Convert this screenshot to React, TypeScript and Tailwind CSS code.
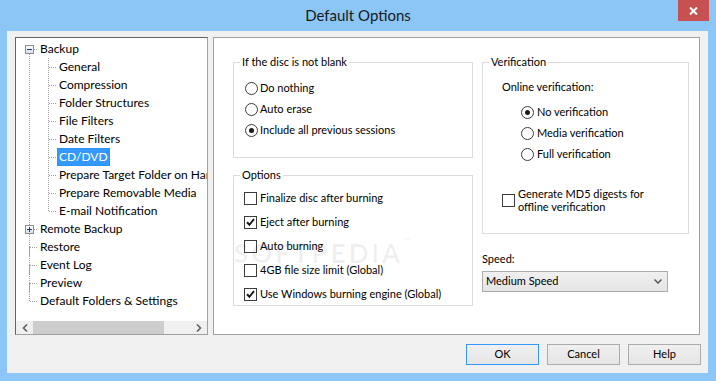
import React from "react";

const DOT = "#a0a0a0";

function RootCell({ up, down, box }: { up?: boolean; down?: boolean; box?: "+" | "-" }) {
  return (
    <svg width="17" height="18" className="shrink-0 block">
      {up && <line x1="8.5" y1="0" x2="8.5" y2={box ? 5 : 9.5} stroke={DOT} strokeDasharray="1 1" />}
      {down && <line x1="8.5" y1={box ? 14 : 9} x2="8.5" y2="18" stroke={DOT} strokeDasharray="1 1" />}
      {!box && up && down && <line x1="8.5" y1="0" x2="8.5" y2="18" stroke={DOT} strokeDasharray="1 1" />}
      <line x1={box ? 13 : 9} y1="9.5" x2="17" y2="9.5" stroke={DOT} strokeDasharray="1 1" />
      {box && (
        <>
          <defs>
            <linearGradient id="bx" x1="0" y1="0" x2="0" y2="1">
              <stop offset="0" stopColor="#ffffff" />
              <stop offset="1" stopColor="#d8dde6" />
            </linearGradient>
          </defs>
          <rect x="4.5" y="5.5" width="8" height="8" fill="url(#bx)" stroke="#8f8f8f" />
          <line x1="6" y1="9.5" x2="11" y2="9.5" stroke="#1f3a78" />
          {box === "+" && <line x1="8.5" y1="7" x2="8.5" y2="12" stroke="#1f3a78" />}
        </>
      )}
    </svg>
  );
}

function PassCell() {
  return (
    <svg width="17" height="18" className="shrink-0 block">
      <line x1="8.5" y1="0" x2="8.5" y2="18" stroke={DOT} strokeDasharray="1 1" />
    </svg>
  );
}

function ChildCell({ last }: { last?: boolean }) {
  return (
    <svg width="19" height="18" className="shrink-0 block">
      <line x1="10.5" y1="0" x2="10.5" y2={last ? 10 : 18} stroke={DOT} strokeDasharray="1 1" />
      <line x1="11" y1="9.5" x2="19" y2="9.5" stroke={DOT} strokeDasharray="1 1" />
    </svg>
  );
}

function Label({ text, selected }: { text: string; selected?: boolean }) {
  return selected ? (
    <span className="h-[18px] px-[1px] flex items-center whitespace-nowrap bg-[#3399ff] text-white border border-dotted border-[#cc6600]">
      {text}
    </span>
  ) : (
    <span className="h-[18px] px-[2px] flex items-center whitespace-nowrap text-black">{text}</span>
  );
}

function Radio({ checked }: { checked?: boolean }) {
  return (
    <span className="w-[13px] h-[13px] rounded-full border border-[#3c3c3c] bg-white flex items-center justify-center shrink-0">
      {checked && <span className="w-[5px] h-[5px] rounded-full bg-[#1c1c1c]" />}
    </span>
  );
}

function Check({ checked }: { checked?: boolean }) {
  return (
    <span className="w-[13px] h-[13px] border border-[#3c3c3c] bg-white flex items-center justify-center shrink-0">
      {checked && (
        <svg width="9" height="9" viewBox="0 0 9 9">
          <path d="M1 4.2 L3.4 6.8 L8 1.2" stroke="#1c1c1c" strokeWidth="2" fill="none" />
        </svg>
      )}
    </span>
  );
}

function Btn({ text, focus }: { text: string; focus?: boolean }) {
  return (
    <button
      className={
        "w-[73px] h-[21px] flex items-center justify-center text-black bg-gradient-to-b from-[#f0f0f0] to-[#e5e5e5] border " +
        (focus ? "border-[#3399ff]" : "border-[#acacac]")
      }
    >
      {text}
    </button>
  );
}

export default function App() {
  const children = [
    "General",
    "Compression",
    "Folder Structures",
    "File Filters",
    "Date Filters",
    "CD/DVD",
    "Prepare Target Folder on Hard Disk",
    "Prepare Removable Media",
    "E-mail Notification",
  ];
  return (
    <div className="w-[716px] h-[381px] bg-[#8bc6f7] flex flex-col font-[family-name:Lato,'Liberation_Sans',sans-serif] text-[12px] text-black overflow-hidden">
      {/* Title bar */}
      <div className="h-[31px] grid grid-cols-[1fr_auto_1fr] shrink-0">
        <div />
        <div className="flex items-center pb-[1px] text-[15px] text-[#1a1a1a]">Default Options</div>
        <div className="flex justify-end pr-[7px]">
          <div className="w-[31px] h-[21px] bg-[#c75050] flex items-center justify-center">
            <svg width="9" height="8" viewBox="0 0 9 8">
              <path d="M1 0.5 L8 7.5 M8 0.5 L1 7.5" stroke="#fff" strokeWidth="2" />
            </svg>
          </div>
        </div>
      </div>

      {/* Client */}
      <div className="mx-[7px] mr-[8px] h-[342px] bg-[#f0f0f0] flex flex-col">
        <div className="flex gap-[5px] ml-[8px] mr-[8px] mt-[6px] h-[298px]">
          {/* Tree */}
          <div className="w-[193px] h-full bg-white border border-t-[#646464] border-l-[#646464] border-r-[#a0a0a0] border-b-[#a0a0a0] flex flex-col overflow-hidden">
            <div className="flex-1 pt-[2px] pl-[5px] flex flex-col">
              <div className="flex">
                <RootCell down box="-" />
                <Label text="Backup" />
              </div>
              {children.map((c, i) => (
                <div className="flex" key={c}>
                  <PassCell />
                  <ChildCell last={i === children.length - 1} />
                  <Label text={c} selected={c === "CD/DVD"} />
                </div>
              ))}
              <div className="flex">
                <RootCell up down box="+" />
                <Label text="Remote Backup" />
              </div>
              {["Restore", "Event Log", "Preview"].map((t) => (
                <div className="flex" key={t}>
                  <RootCell up down />
                  <Label text={t} />
                </div>
              ))}
              <div className="flex">
                <RootCell up />
                <Label text="Default Folders & Settings" />
              </div>
            </div>
            <div className="h-[13px] bg-[#f0f0f0] flex items-center shrink-0">
              <div className="w-[17px] flex items-center justify-center">
                <svg width="6" height="8" viewBox="0 0 6 8">
                  <path d="M5 0.5 L1.5 4 L5 7.5" stroke="#606060" strokeWidth="1.6" fill="none" />
                </svg>
              </div>
              <div className="w-[131px] h-full bg-[#cdcdcd]" />
              <div className="flex-1" />
              <div className="w-[17px] flex items-center justify-center">
                <svg width="6" height="8" viewBox="0 0 6 8">
                  <path d="M1 0.5 L4.5 4 L1 7.5" stroke="#606060" strokeWidth="1.6" fill="none" />
                </svg>
              </div>
            </div>
          </div>

          {/* Right panel */}
          <div className="relative flex-1 h-full bg-white border border-[#a0a0a0] flex pl-[19px] pt-[16px] gap-[9px] text-[11px]">
            <div className="w-[240px] flex flex-col">
              <fieldset className="h-[104px] border border-[#dcdcdc]">
                <legend className="ml-[6px] px-[2px] leading-4">If the disc is not blank</legend>
                <div className="pt-[8px] pl-[11px] flex flex-col">
                  {[
                    ["Do nothing", false],
                    ["Auto erase", false],
                    ["Include all previous sessions", true],
                  ].map(([t, c]) => (
                    <div key={t as string} className="h-[21px] flex items-center gap-[2px]">
                      <Radio checked={c as boolean} />
                      <span>{t as string}</span>
                    </div>
                  ))}
                </div>
              </fieldset>
              <fieldset className="mt-[9px] h-[139px] border border-[#dcdcdc]">
                <legend className="ml-[6px] px-[2px] leading-4">Options</legend>
                <div className="pt-[3px] pl-[10px] flex flex-col">
                  {[
                    ["Finalize disc after burning", false],
                    ["Eject after burning", true],
                    ["Auto burning", false],
                    ["4GB file size limit (Global)", false],
                    ["Use Windows burning engine (Global)", true],
                  ].map(([t, c]) => (
                    <div key={t as string} className="h-[24px] flex items-center gap-[3px]">
                      <Check checked={c as boolean} />
                      <span>{t as string}</span>
                    </div>
                  ))}
                </div>
              </fieldset>
            </div>

            <div className="w-[207px] flex flex-col">
              <fieldset className="h-[180px] border border-[#dcdcdc]">
                <legend className="ml-[6px] px-[2px] leading-4">Verification</legend>
                <div className="pl-[19px]">
                  <div className="pt-[9px] leading-4">Online verification:</div>
                  <div className="mt-[7px] pl-[19px] flex flex-col">
                    {[
                      ["No verification", true],
                      ["Media verification", false],
                      ["Full verification", false],
                    ].map(([t, c]) => (
                      <div key={t as string} className="h-[21px] flex items-center gap-[3px]">
                        <Radio checked={c as boolean} />
                        <span>{t as string}</span>
                      </div>
                    ))}
                  </div>
                  <div className="mt-[22px] flex items-center gap-[3px]">
                    <Check />
                    <span className="leading-[13px]">
                      Generate MD5 digests for
                      <br />
                      offline verification
                    </span>
                  </div>
                </div>
              </fieldset>
              <div className="mt-[17px] leading-4">Speed:</div>
              <div className="mt-[4px] w-[186px] h-[21px] border border-[#acacac] bg-gradient-to-b from-[#f0f0f0] to-[#e5e5e5] flex items-center pl-[3px] pr-[5px]">
                <span className="flex-1">Medium Speed</span>
                <svg width="8" height="5" viewBox="0 0 8 5">
                  <path d="M0.5 0.5 L4 4 L7.5 0.5" stroke="#555" strokeWidth="1.5" fill="none" />
                </svg>
              </div>
            </div>

            <div className="absolute left-[20px] top-[196px] pointer-events-none select-none text-[26px] tracking-[3px] text-black/[0.06] font-bold">
              SOFTPEDIA<span className="text-[10px] align-top">™</span>
            </div>
          </div>
        </div>

        <div className="mt-[9px] mr-[7px] flex justify-end gap-[8px] text-[11px]">
          <Btn text="OK" focus />
          <Btn text="Cancel" />
          <Btn text="Help" />
        </div>
      </div>
    </div>
  );
}
